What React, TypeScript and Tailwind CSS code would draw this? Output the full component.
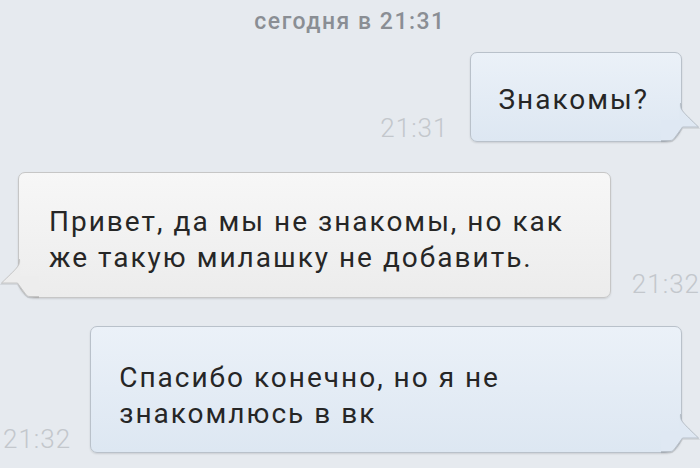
const TAIL_EDGE = "M19.5 0 L19.5 2 C19.5 7 22 9 37.5 24 L21.5 24 L13.5 35 C12 37 11 37.5 9 37.5 L0 37.5";

const Tail = ({ side, fill, stroke }: { side: "left" | "right"; fill: string; stroke: string }) => {
  const pos = side === "right" ? "right-[-20px]" : "left-[-20px] -scale-x-100";
  return (
    <svg width="40" height="40" viewBox="0 0 40 40" className={`absolute bottom-[-2px] ${pos}`}>
      {/* soft shadow under the tail */}
      <path d={TAIL_EDGE} transform="translate(0 1)" fill="none" stroke="rgba(0,0,0,0.1)" strokeWidth="1.5" />
      <path
        d="M18.6 0 L19.5 0 L19.5 2 C19.5 7 22 9 37.5 24 L21.5 24 L13.5 35 C12 37 11 37.5 9 37.5 L0 37.5 L0 17 L18.6 17 Z"
        fill={fill}
      />
      <path d={TAIL_EDGE} fill="none" stroke={stroke} strokeWidth="1" />
    </svg>
  );
};

const Time = ({ children }: { children: string }) => (
  <span className="text-[26px] leading-none font-light tracking-[1px] text-[#c3c7cc] pb-[1px]">{children}</span>
);

export default function App() {
  return (
    <div className="w-[700px] h-[468px] bg-[#e6eaef] overflow-hidden flex flex-col font-['Roboto',sans-serif] text-[#262626]">
      <div className="h-[44px] pt-[9px] text-center text-[23px] font-medium tracking-[1.5px] text-[#8a8e94] leading-[26px]">
        сегодня в 21:31
      </div>

      <div className="flex justify-end items-end gap-[22px] pr-[18px] mt-[8px]">
        <Time>21:31</Time>
        <div className="relative rounded-[7px] rounded-br-[18px] border border-[#b9c1ca] bg-gradient-to-b from-[#ebf1f8] to-[#dde7f2] shadow-[0_1px_2px_rgba(0,0,0,0.12)] pl-[27px] pr-[32px] pt-[29px] pb-[23px]">
          <p className="text-[28px] leading-[36px] tracking-[2px]">Знакомы?</p>
          <Tail side="right" fill="#dfe8f3" stroke="#b9c1ca" />
        </div>
      </div>

      <div className="flex items-end gap-[21px] pl-[18px] mt-[30px]">
        <div className="relative w-[593px] rounded-[7px] rounded-bl-[18px] border border-[#c6c6c6] bg-gradient-to-b from-[#f7f7f7] to-[#ececec] shadow-[0_1px_2px_rgba(0,0,0,0.12)] pl-[30px] pr-[30px] pt-[31px] pb-[21px]">
          <p className="text-[28px] leading-[36px] tracking-[2px]">Привет, да мы не знакомы, но как же такую милашку не добавить.</p>
          <Tail side="left" fill="#ededed" stroke="#c6c6c6" />
        </div>
        <Time>21:32</Time>
      </div>

      <div className="flex items-end gap-[19px] pl-[3px] mt-[28px]">
        <Time>21:32</Time>
        <div className="relative w-[592px] rounded-[7px] rounded-br-[18px] border border-[#b9c1ca] bg-gradient-to-b from-[#ebf1f8] to-[#dde7f2] shadow-[0_1px_2px_rgba(0,0,0,0.12)] pl-[28px] pr-[20px] pt-[33px] pb-[20px]">
          <p className="text-[28px] leading-[36px] tracking-[2px] max-w-[440px]">Спасибо конечно, но я не знакомлюсь в вк</p>
          <Tail side="right" fill="#dfe8f3" stroke="#b9c1ca" />
        </div>
      </div>
    </div>
  );
}
